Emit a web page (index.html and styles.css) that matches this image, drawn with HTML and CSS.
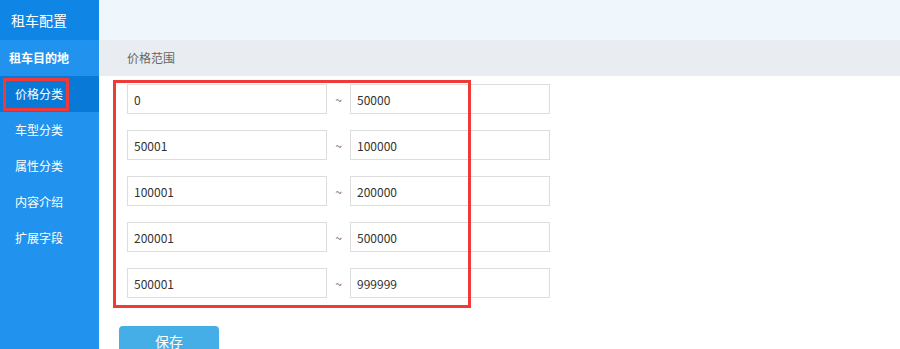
FILE: index.html
```html
<!DOCTYPE html>
<html lang="zh-CN">
<head>
    <meta charset="UTF-8">
    <meta name="viewport" content="width=device-width, initial-scale=1.0">
    <title>租车配置</title>
    <link rel="stylesheet" href="styles.css">
</head>
<body>
    <div class="sidebar">
        <div class="side-title">租车配置</div>
        <div class="side-group">租车目的地</div>
        <div class="side-item active">价格分类<span class="mark mark-side"></span></div>
        <div class="side-item">车型分类</div>
        <div class="side-item">属性分类</div>
        <div class="side-item">内容介绍</div>
        <div class="side-item">扩展字段</div>
    </div>

    <div class="main">
        <div class="top-bar"></div>
        <div class="tab-bar">价格范围</div>
        <div class="form">
            <div class="row">
                <input class="field" type="text" value="0">
                <span class="tilde">~</span>
                <input class="field" type="text" value="50000">
            </div>
            <div class="row">
                <input class="field" type="text" value="50001">
                <span class="tilde">~</span>
                <input class="field" type="text" value="100000">
            </div>
            <div class="row">
                <input class="field" type="text" value="100001">
                <span class="tilde">~</span>
                <input class="field" type="text" value="200000">
            </div>
            <div class="row">
                <input class="field" type="text" value="200001">
                <span class="tilde">~</span>
                <input class="field" type="text" value="500000">
            </div>
            <div class="row">
                <input class="field" type="text" value="500001">
                <span class="tilde">~</span>
                <input class="field" type="text" value="999999">
            </div>
            <button class="save-btn">保存</button>
            <span class="mark mark-form"></span>
        </div>
    </div>
</body>
</html>
```

FILE: styles.css
```css
body {
    margin: 0;
    display: flex;
    min-height: 100vh;
    font-family: "Noto Sans CJK SC", "Noto Sans", sans-serif;
    background-color: #fff;
    overflow: hidden;
}
.sidebar {
    width: 99px;
    flex-shrink: 0;
    background-color: #2193ee;
    color: #fff;
}
.side-title {
    height: 40px;
    line-height: 40px;
    padding-left: 11px;
    font-size: 14px;
    background-color: #0f86e6;
}
.side-group {
    height: 36px;
    line-height: 36px;
    padding-left: 9px;
    font-size: 12px;
    font-weight: bold;
}
.side-item {
    position: relative;
    height: 36px;
    line-height: 36px;
    padding-left: 15px;
    font-size: 12px;
}
.side-item.active {
    background-color: #0879d7;
}
.main {
    flex: 1;
}
.top-bar {
    height: 40px;
    background-color: #eff7fd;
}
.tab-bar {
    height: 36px;
    line-height: 36px;
    padding-left: 28px;
    font-size: 12px;
    color: #666;
    background-color: #e9edf1;
}
.form {
    position: relative;
    padding: 8px 0 0 28px;
}
.row {
    display: flex;
    align-items: center;
    margin-bottom: 16px;
}
.field {
    box-sizing: border-box;
    width: 200px;
    height: 30px;
    margin: 0;
    padding: 0 6px;
    border: 1px solid #ddd;
    font-family: inherit;
    font-size: 12px;
    color: #333;
    outline: none;
}
.tilde {
    width: 23px;
    text-align: center;
    font-size: 12px;
    color: #666;
}
.save-btn {
    display: block;
    width: 100px;
    height: 30px;
    margin: 28px 0 0 -8px;
    border: none;
    border-radius: 4px;
    background-color: #45aee6;
    color: #fff;
    font-family: inherit;
    font-size: 14px;
    cursor: pointer;
}
.mark {
    position: absolute;
    box-sizing: border-box;
    border: 3px solid #f03a3a;
    pointer-events: none;
}
.mark-side {
    left: 3px;
    top: 2px;
    width: 66px;
    height: 33px;
}
.mark-form {
    left: 14px;
    top: 4px;
    width: 358px;
    height: 228px;
}
```
